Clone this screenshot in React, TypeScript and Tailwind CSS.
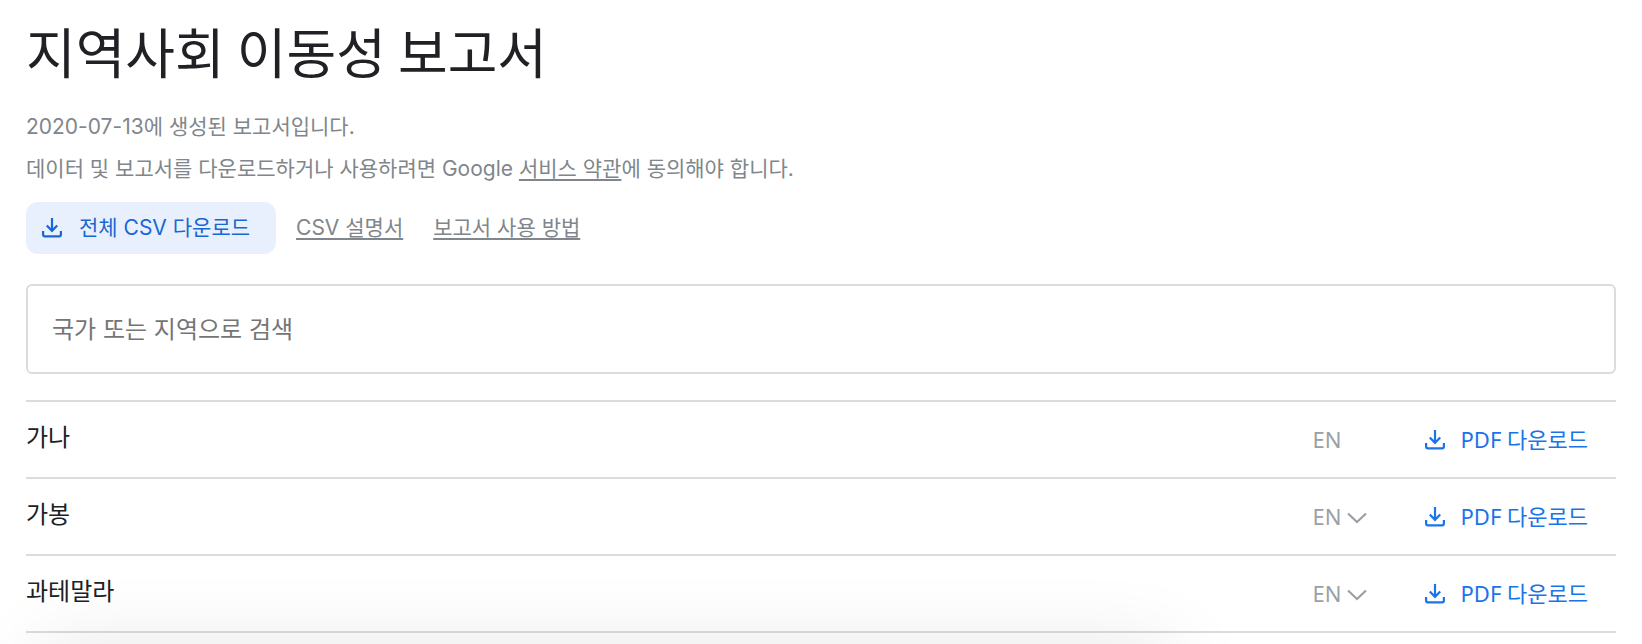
type Report = {
  name: string;
  lang: string;
  hasMenu: boolean;
};

const reports: Report[] = [
  { name: '가나', lang: 'EN', hasMenu: false },
  { name: '가봉', lang: 'EN', hasMenu: true },
  { name: '과테말라', lang: 'EN', hasMenu: true },
];

function DownloadIcon() {
  return (
    <svg
      viewBox="0 0 20 20"
      className="h-5 w-5 shrink-0"
      fill="none"
      stroke="currentColor"
      strokeWidth="2.2"
      aria-hidden="true"
    >
      <path d="M10 0V12.6M4.8 7.4L10 12.8L15.2 7.4" />
      <path d="M1.1 13V16.6Q1.1 18.4 2.9 18.4H17.1Q18.9 18.4 18.9 16.6V13" />
    </svg>
  );
}

function ChevronIcon() {
  return (
    <svg
      viewBox="0 0 20 12"
      className="mt-0.5 h-3 w-5 shrink-0"
      fill="none"
      stroke="currentColor"
      strokeWidth="2.2"
      aria-hidden="true"
    >
      <path d="M1 1.5L10 10L19 1.5" />
    </svg>
  );
}

function ReportRow({ report }: { report: Report }) {
  return (
    <li className="flex h-[77px] items-center border-b-2 border-[#dadce0]">
      <span className="flex-1 pb-1 text-2xl text-[#202124]">{report.name}</span>
      <div className="flex items-center font-['Noto_Sans','Noto_Sans_CJK_KR',sans-serif] text-[22px]">
        <div className="w-[112px] text-[#9aa0a6]">
          {report.hasMenu ? (
            <button type="button" className="flex items-center gap-1.5">
              {report.lang}
              <ChevronIcon />
            </button>
          ) : (
            <span>{report.lang}</span>
          )}
        </div>
        <a href="#pdf" className="flex items-center gap-4 pr-7 text-[#1a73e8]">
          <DownloadIcon />
          PDF 다운로드
        </a>
      </div>
    </li>
  );
}

export default function App() {
  return (
    <div className="h-screen overflow-hidden bg-white font-['Inter','Noto_Sans_CJK_KR',sans-serif]">
      <main className="px-[26px] pt-5">
        <h1 className="font-['Noto_Sans_CJK_KR',sans-serif] text-[54px] leading-[62px] text-[#202124]">
          지역사회 이동성 보고서
        </h1>

        <div className="mt-6 text-[21px] leading-[42px] text-[#80868b]">
          <p>2020-07-13에 생성된 보고서입니다.</p>
          <p>
            데이터 및 보고서를 다운로드하거나 사용하려면 Google{' '}
            <a href="#terms" className="underline decoration-2 underline-offset-3">
              서비스 약관
            </a>
            에 동의해야 합니다.
          </p>
        </div>

        <div className="mt-3 flex items-center text-[21px] text-[#80868b]">
          <a
            href="#csv"
            className="flex h-[52px] items-center gap-[17px] rounded-xl bg-[#e8f0fe] pr-[26px] pl-4 text-[#1967d2]"
          >
            <DownloadIcon />
            전체 CSV 다운로드
          </a>
          <a href="#csv-docs" className="ml-5 underline decoration-2 underline-offset-3">
            CSV 설명서
          </a>
          <a href="#how-to" className="ml-[30px] underline decoration-2 underline-offset-3">
            보고서 사용 방법
          </a>
        </div>

        <input
          type="text"
          aria-label="국가 또는 지역으로 검색"
          placeholder="국가 또는 지역으로 검색"
          className="mt-[30px] block h-[90px] w-full rounded-md border-2 border-[#dadce0] px-6 text-2xl text-[#202124] placeholder:text-[#757575]"
        />

        <ul className="mt-[26px] border-t-2 border-[#dadce0]">
          {reports.map((report) => (
            <ReportRow key={report.name} report={report} />
          ))}
        </ul>
      </main>

      <div className="pointer-events-none fixed top-full left-10 h-40 w-[69%] shadow-[0_4px_80px_rgba(0,0,0,0.1)]" />
    </div>
  );
}
